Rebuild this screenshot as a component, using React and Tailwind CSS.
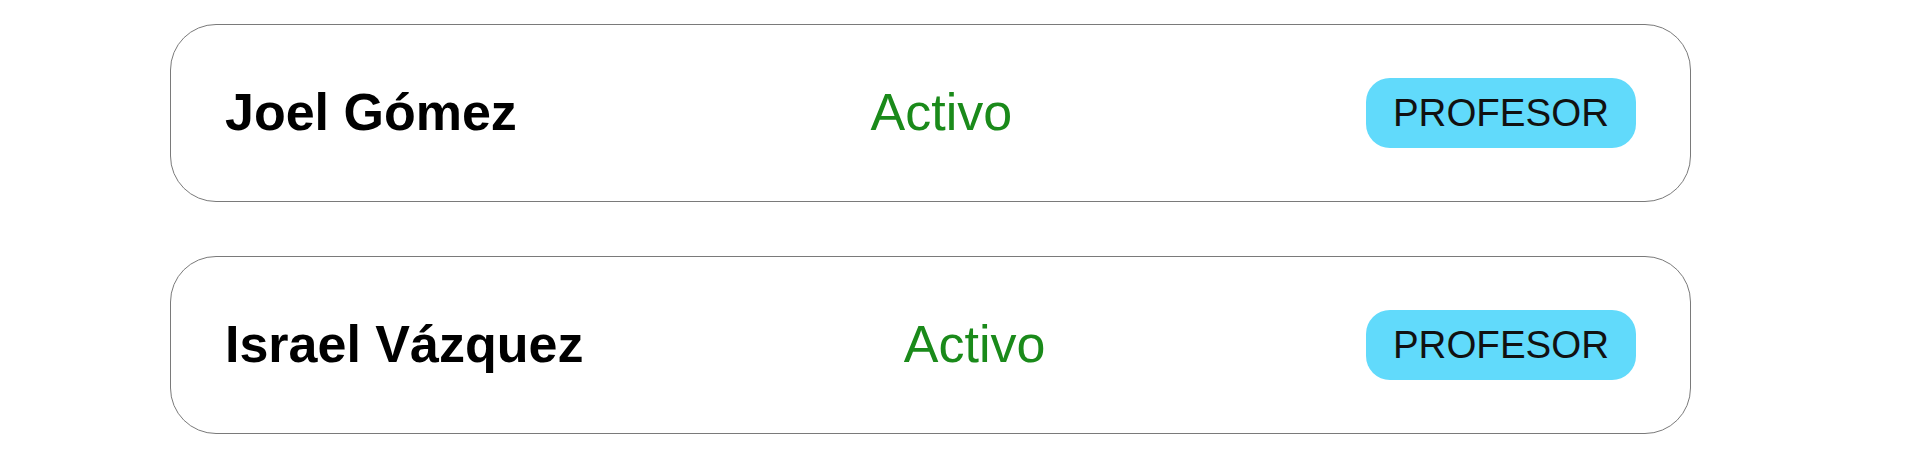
export default function App() {
  const rows = [
    { name: "Joel Gómez", status: "Activo", role: "PROFESOR" },
    { name: "Israel Vázquez", status: "Activo", role: "PROFESOR" },
  ];
  return (
    <div
      className="min-h-[466px] bg-white pt-[24px] pl-[170px] flex flex-col gap-[54px]"
      style={{ fontFamily: '"Liberation Sans", Arial, sans-serif' }}
    >
      {rows.map((r) => (
        <div
          key={r.name}
          className="w-[1521px] h-[178px] border-[1.5px] border-[#7a7a7a] rounded-[46px] px-[54px] flex items-center justify-between"
        >
          <span className="text-[52px] font-bold text-black leading-none -mt-[2px]">{r.name}</span>
          <span className="text-[52px] text-[#1a8a1a] leading-none -mt-[2px]">{r.status}</span>
          <span className="h-[70px] px-[27px] rounded-[24px] bg-[#61dafb] text-[38.5px] text-[#111] flex items-center leading-none">
            {r.role}
          </span>
        </div>
      ))}
    </div>
  );
}
